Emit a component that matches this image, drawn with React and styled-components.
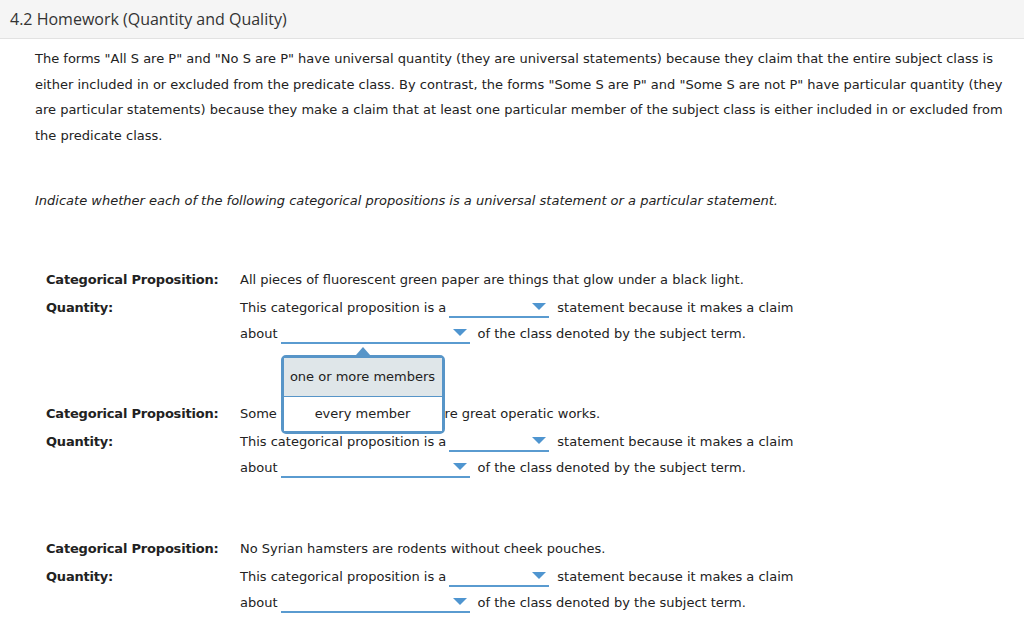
import React from "react";
import styled, { createGlobalStyle } from "styled-components";

const Global = createGlobalStyle`
  html, body { margin: 0; padding: 0; background: #fff; }
  body { font-family: "DejaVu Sans", Verdana, sans-serif; color: #222; }
`;

const Header = styled.header`
  height: 38px;
  background: #f5f5f5;
  border-bottom: 1px solid #e2e2e2;
  display: flex;
  align-items: center;
  padding-left: 10px;
  font-family: "Open Sans", sans-serif;
  font-size: 16px;
  color: #333;
`;

const Content = styled.main`
  padding: 7px 14px 0 35px;
  font-size: 13px;
`;

const Para = styled.p`
  margin: 0;
  line-height: 25.7px;
`;

const Prompt = styled.p`
  margin: 39px 0 0;
  line-height: 26px;
  font-style: italic;
`;

const Block = styled.section`
  display: grid;
  grid-template-columns: 194px 1fr;
  margin: ${(p) => p.$top}px 0 0 11px;
`;

const Label = styled.div`
  font-weight: bold;
  letter-spacing: -0.2px;
  line-height: 26px;
  height: ${(p) => p.$h || 26}px;
`;

const Line = styled.div`
  line-height: 26px;
  height: ${(p) => p.$h || 26}px;
  white-space: nowrap;
`;

const SelectWrap = styled.span`
  position: relative;
  display: inline-block;
  vertical-align: -6px;
  width: ${(p) => p.$w}px;
  height: 18px;
  margin: 0 8px 0 3px;
  border-bottom: 2px solid #5a9bd0;
`;

const Caret = styled.span`
  position: absolute;
  right: 3px;
  top: 5px;
  width: 0;
  height: 0;
  border-left: 7px solid transparent;
  border-right: 7px solid transparent;
  border-top: 7px solid #4f95d0;
`;

const Menu = styled.div`
  position: absolute;
  left: 0;
  top: 31px;
  width: 158px;
  border: 3px solid #5795c8;
  border-radius: 5px;
  background: #fff;
  z-index: 5;
  &::before {
    content: "";
    position: absolute;
    top: -11px;
    left: 72px;
    border-left: 7px solid transparent;
    border-right: 7px solid transparent;
    border-bottom: 8px solid #5795c8;
  }
`;

const Option = styled.div`
  text-align: center;
  background: ${(p) => (p.$active ? "#dfe6e9" : "#fff")};
  border-bottom: ${(p) => (p.$active ? "1px solid #5795c8" : "none")};
  line-height: ${(p) => (p.$active ? 38 : 34)}px;
  color: #222;
`;

function Select({ width, open }) {
  return (
    <SelectWrap $w={width}>
      <Caret />
      {open && (
        <Menu>
          <Option $active>one or more members</Option>
          <Option>every member</Option>
        </Menu>
      )}
    </SelectWrap>
  );
}

const items = [
  { top: 53, text: "All pieces of fluorescent green paper are things that glow under a black light.", open: true },
  { top: 54, text: "Some forms of entertainment are great operatic works." },
  { top: 55, text: "No Syrian hamsters are rodents without cheek pouches." },
];

export default function App() {
  return (
    <>
      <Global />
      <Header>4.2 Homework (Quantity and Quality)</Header>
      <Content>
        <Para>
          The forms "All S are P" and "No S are P" have universal quantity (they are universal statements) because they
          claim that the entire subject class is either included in or excluded from the predicate class. By contrast, the
          forms "Some S are P" and "Some S are not P" have particular quantity (they are particular statements) because
          they make a claim that at least one particular member of the subject class is either included in or excluded
          from the predicate class.
        </Para>
        <Prompt>
          Indicate whether each of the following categorical propositions is a universal statement or a particular
          statement.
        </Prompt>
        {items.map((it, i) => (
          <Block key={i} $top={it.top}>
            <Label $h={28}>Categorical Proposition:</Label>
            <Line $h={28}>{it.text}</Line>
            <Label>Quantity:</Label>
            <Line>
              This categorical proposition is a<Select width={100} />statement because it makes a claim
            </Line>
            <div />
            <Line>
              about<Select width={189} open={it.open} />of the class denoted by the subject term.
            </Line>
          </Block>
        ))}
      </Content>
    </>
  );
}
